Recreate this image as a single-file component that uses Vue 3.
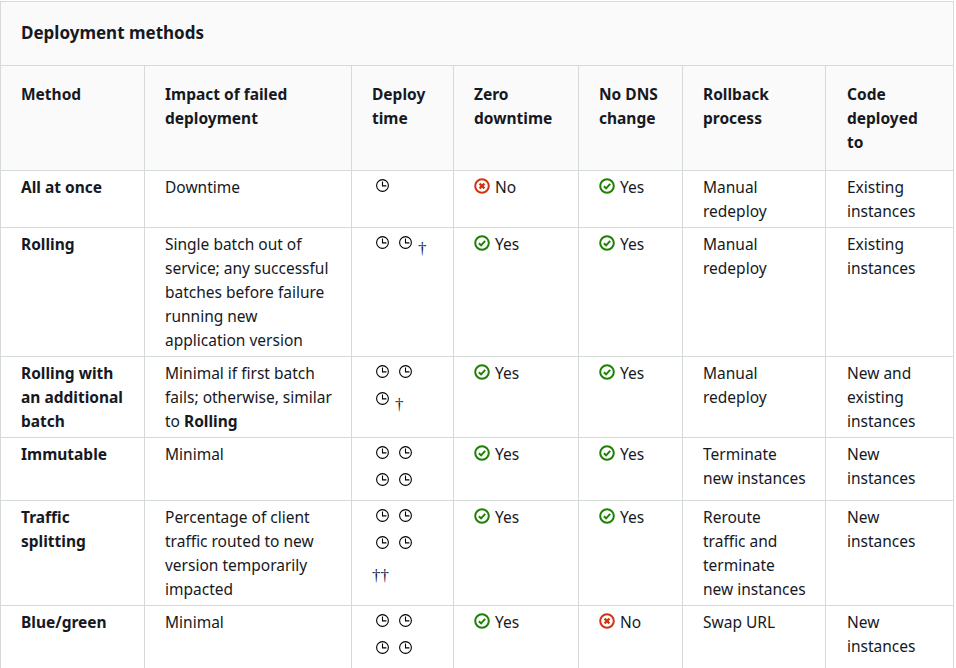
<script setup>
const columns = [
  ['Method', 'c1'],
  ['Impact of failed deployment', 'c2'],
  ['Deploy time', 'c3'],
  ['Zero downtime', 'c4'],
  ['No DNS change', 'c5'],
  ['Rollback process', 'c6'],
  ['Code deployed to', 'c7'],
]
const rows = [
  { m: 'All at once', impact: ['Downtime'], clocks: 1, mark: '', marks: [false, true], back: 'Manual redeploy', code: 'Existing instances' },
  { m: 'Rolling', impact: ['Single batch out of service; any successful batches before failure running new application version'], clocks: 2, mark: '†', marks: [true, true], back: 'Manual redeploy', code: 'Existing instances' },
  { m: 'Rolling with an additional batch', impact: ['Minimal if first batch fails; otherwise, similar to ', 'Rolling'], clocks: 3, mark: '†', marks: [true, true], back: 'Manual redeploy', code: 'New and existing instances' },
  { m: 'Immutable', impact: ['Minimal'], clocks: 4, mark: '', marks: [true, true], back: 'Terminate new instances', code: 'New instances' },
  { m: 'Traffic splitting', impact: ['Percentage of client traffic routed to new version temporarily impacted'], clocks: 4, mark: '††', marks: [true, true], back: 'Reroute traffic and terminate new instances', code: 'New instances' },
  { m: 'Blue/green', impact: ['Minimal'], clocks: 4, mark: '', marks: [true, false], back: 'Swap URL', code: 'New instances' },
]
</script>

<template>
  <div class="page">
    <table class="methods">
      <caption class="title">Deployment methods</caption>
      <colgroup>
        <col v-for="c in columns" :key="c[1]" :class="c[1]" />
      </colgroup>
      <thead>
        <tr>
          <th v-for="c in columns" :key="c[1]">{{ c[0] }}</th>
        </tr>
      </thead>
      <tbody>
        <tr v-for="r in rows" :key="r.m">
          <td class="name">{{ r.m }}</td>
          <td>{{ r.impact[0] }}<b v-if="r.impact[1]">{{ r.impact[1] }}</b></td>
          <td>
            <span v-for="n in r.clocks" :key="n" class="clock">
              <svg width="13" height="13" viewBox="0 0 13 13" fill="none" stroke="#000">
                <circle cx="6.5" cy="6.5" r="5.9" stroke-width="1.1" />
                <path d="M6.5 2.4V6.9H10.4" stroke-width="1.1" />
              </svg>
            </span><span v-if="r.mark" class="mark">{{ r.mark }}</span>
          </td>
          <td v-for="(v, i) in r.marks" :key="i">
            <span class="status">
              <svg width="16" height="16" viewBox="0 0 16 16" fill="none" :stroke="v ? '#1d8102' : '#d13212'" stroke-width="2">
                <circle cx="8" cy="8" r="6.8" />
                <path v-if="v" d="M4.9 8.2L7.1 10.4L11.2 5.9" />
                <path v-else d="M5.6 5.6L10.4 10.4M10.4 5.6L5.6 10.4" stroke-width="2.2" />
              </svg>
              {{ v ? 'Yes' : 'No' }}
            </span>
          </td>
          <td>{{ r.back }}</td>
          <td>{{ r.code }}</td>
        </tr>
      </tbody>
    </table>
  </div>
</template>

<style>
html, body {
  margin: 0;
  overflow: hidden;
  background: #fff;
}
</style>

<style scoped>
.page {
  height: 668px;
  overflow: hidden;
  padding-top: 1px;
  box-sizing: border-box;
  font-family: "Noto Sans", sans-serif;
  font-size: 15.5px;
  line-height: 24px;
  color: #16191f;
}
.methods {
  width: 954px;
  table-layout: fixed;
  border-collapse: collapse;
}
.c1 { width: 144px; }
.c2 { width: 207px; }
.c3 { width: 102px; }
.c4 { width: 125px; }
.c5 { width: 104px; }
.c6 { width: 143px; }
.c7 { width: 128px; }
.title {
  box-sizing: border-box;
  height: 64px;
  padding: 19px 20px;
  text-align: left;
  font-size: 17px;
  line-height: 24px;
  font-weight: 700;
  background: #fafafa;
  border: 1px solid #d5dbdb;
  border-bottom: 0;
}
th, td {
  border: 1px solid #d5dbdb;
  text-align: left;
  vertical-align: top;
}
th {
  padding: 16px 20px;
  font-weight: 700;
  background: #fafafa;
}
td {
  padding: 4px 19px 4px 20px;
}
th:last-child, td:last-child {
  padding-left: 21px;
}
.name, b {
  font-weight: 700;
}
.clock {
  display: inline-block;
  width: 23px;
  height: 27px;
  box-sizing: border-box;
  padding: 4px 0 0 4px;
  vertical-align: top;
}
.clock svg {
  display: block;
}
.mark {
  font-family: "Liberation Serif", serif;
  font-size: 17px;
  color: #14224a;
  vertical-align: top;
  line-height: 34px;
  margin-right: 1px;
}
.status svg {
  vertical-align: -1px;
  margin-right: 1px;
}
</style>
